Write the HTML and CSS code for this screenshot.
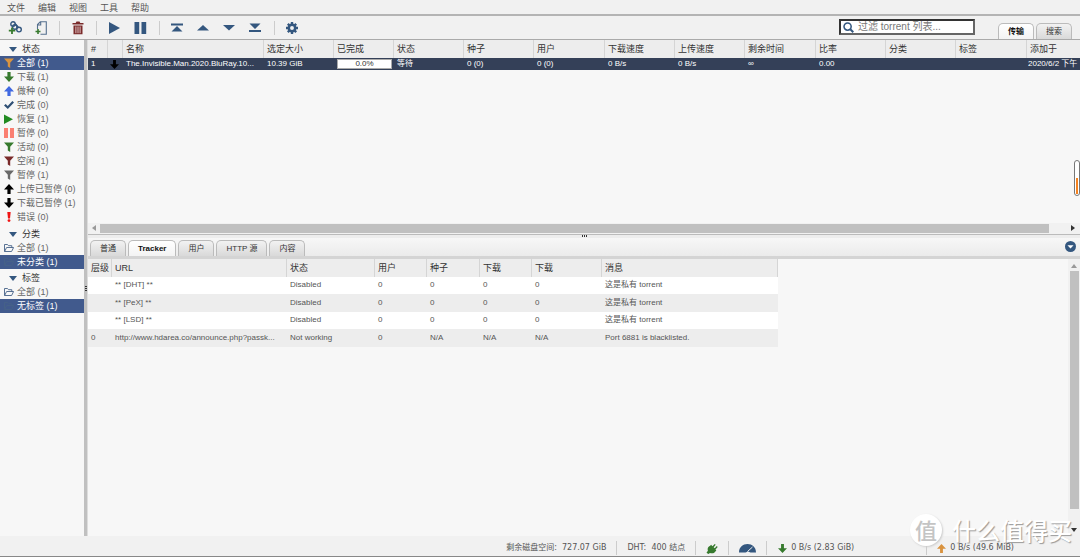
FILE: index.html
```html
<!DOCTYPE html>
<html lang="zh-CN">
<head>
<meta charset="utf-8">
<title>qBittorrent Web UI</title>
<link rel="stylesheet" href="styles.css">
</head>
<body>
<svg class="defs" aria-hidden="true">
  <symbol id="filter" viewBox="0 0 10 10"><path d="M0 .5h10L6.200 4.800V10L3.800 8.600V4.800z"/></symbol>
  <symbol id="down" viewBox="0 0 10 10"><path d="M3.400 0h3.200v4.600H10L5 10 0 4.600h3.400z"/></symbol>
  <symbol id="up" viewBox="0 0 10 10"><path d="M3.400 10h3.200V5.400H10L5 0 0 5.400h3.400z"/></symbol>
  <symbol id="check" viewBox="0 0 10 10"><path d="M0 5.600 1.700 4l2 2.100L8.400 1 10 2.500 3.800 9z"/></symbol>
  <symbol id="play" viewBox="0 0 10 10"><path d="M0 .5l9 4.700-9 4.700z"/></symbol>
  <symbol id="pause" viewBox="0 0 10 10"><path d="M0 0h4v10H0zM6 0h4v10H6z"/></symbol>
  <symbol id="error" viewBox="0 0 10 10"><path d="M3.300 0h3.400L6 6.600H4z"/><circle cx="5" cy="8.600" r="1.400"/></symbol>
  <symbol id="folder" viewBox="0 0 10 10"><path d="M.5 8.500V1.500h3l1 1.200h3.300v1.800M.6 8.500l2-4h7l-2 4z" fill="none" stroke="currentColor" stroke-width=".9" stroke-linejoin="round"/></symbol>
  <symbol id="caret" viewBox="0 0 8 5"><path d="M0 0h8L4 5z"/></symbol>
</svg>

<nav class="menubar">
  <button>文件</button><button>编辑</button><button>视图</button><button>工具</button><button>帮助</button>
</nav>

<header class="toolbar">
  <div class="tools">
    <button aria-label="添加链接"><svg viewBox="0 0 14 14"><g fill="none" stroke="#34577f" stroke-width="1.400"><circle cx="5" cy="3" r="2.200"/><circle cx="6.800" cy="6" r="2.200"/><circle cx="11" cy="8.600" r="2.300"/><path d="M7 2.500 10.500 6.500"/></g><path d="M4 6.500v6.500M.8 9.700h6.500" stroke="#377a2e" stroke-width="1.800"/></svg></button>
    <button aria-label="添加文件"><svg viewBox="0 0 14 14"><path d="M3.500 8V3.500l2.800-2.700h6v12.400H6.500M3.500 4h3.200V.8" fill="none" stroke="#56708f" stroke-width="1.100"/><path d="M4 8v5M1.500 10.500h5" stroke="#377a2e" stroke-width="1.600"/></svg></button>
    <span class="sep"></span>
    <button aria-label="删除"><svg viewBox="0 0 14 14"><path d="M1.500 2h3.200L5.500.5h3L9.300 2h3.200v1.600h-11zM2.500 4.400h9v8.800h-9z" fill="#7a2a2a"/><path d="M4.900 5.500v6.700M7 5.500v6.700M9.100 5.500v6.700" stroke="#ead4d4" stroke-width=".9"/></svg></button>
    <span class="sep"></span>
    <button aria-label="继续"><svg viewBox="0 0 14 14"><path d="M1 1l11 6L1 13z"/></svg></button>
    <button aria-label="暂停"><svg viewBox="0 0 14 14"><path d="M.5 1h4.700v12H.5zM7.500 1h4.700v12H7.500z"/></svg></button>
    <span class="sep"></span>
    <button aria-label="移到顶部"><svg viewBox="0 0 14 14"><path d="M0 2.500h12v2H0zM6 5l5.500 5.500H.5z"/></svg></button>
    <button aria-label="上移"><svg viewBox="0 0 14 14"><path d="M6 4l6 5.500H0z"/></svg></button>
    <button aria-label="下移"><svg viewBox="0 0 14 14"><path d="M6 9.500 12 4H0z"/></svg></button>
    <button aria-label="移到底部"><svg viewBox="0 0 14 14"><path d="M.5 2.500h11L6 8zM0 9h12v2H0z"/></svg></button>
    <span class="sep"></span>
    <button aria-label="选项"><svg viewBox="0 0 14 14"><g fill="none" stroke="#34577f"><circle cx="6" cy="7" r="3.200" stroke-width="2.500"/><path d="M6 1v2.500M6 10.500V13M0 7h2.500M9.500 7H12M1.800 2.800l1.700 1.700M8.500 9.500l1.700 1.700M10.200 2.800 8.500 4.500M3.500 9.500l-1.700 1.700" stroke-width="2.400"/></g></svg></button>
  </div>
  <label class="search">
    <svg viewBox="0 0 12 12"><g fill="none" stroke="#34577f"><circle cx="5" cy="5" r="3.900" stroke-width="1.700"/><path d="M8 8l3.200 3.200" stroke-width="2.200"/></g></svg>
    <input type="text" placeholder="过滤 torrent 列表..." aria-label="过滤 torrent 列表">
  </label>
  <div class="tabs view-tabs"><button class="active">传输</button><button>搜索</button></div>
</header>

<div class="workspace">
  <aside class="sidebar">
    <section>
      <h2><svg><use href="#caret"/></svg>状态</h2>
      <ul>
        <li><button class="selected"><svg class="orange"><use href="#filter"/></svg>全部 (1)</button></li>
        <li><button><svg class="green"><use href="#down"/></svg>下载 (1)</button></li>
        <li><button><svg class="blue"><use href="#up"/></svg>做种 (0)</button></li>
        <li><button><svg class="navy"><use href="#check"/></svg>完成 (0)</button></li>
        <li><button><svg class="bright"><use href="#play"/></svg>恢复 (1)</button></li>
        <li><button><svg class="salmon"><use href="#pause"/></svg>暂停 (0)</button></li>
        <li><button><svg class="green"><use href="#filter"/></svg>活动 (0)</button></li>
        <li><button><svg class="maroon"><use href="#filter"/></svg>空闲 (1)</button></li>
        <li><button><svg class="grey"><use href="#filter"/></svg>暂停 (1)</button></li>
        <li><button><svg class="black"><use href="#up"/></svg>上传已暂停 (0)</button></li>
        <li><button><svg class="black"><use href="#down"/></svg>下载已暂停 (1)</button></li>
        <li><button><svg class="red"><use href="#error"/></svg>错误 (0)</button></li>
      </ul>
    </section>
    <section>
      <h2><svg><use href="#caret"/></svg>分类</h2>
      <ul>
        <li><button><svg class="navy"><use href="#folder"/></svg>全部 (1)</button></li>
        <li><button class="selected"><svg class="navy"><use href="#folder"/></svg>未分类 (1)</button></li>
      </ul>
    </section>
    <section>
      <h2><svg><use href="#caret"/></svg>标签</h2>
      <ul>
        <li><button><svg class="navy"><use href="#folder"/></svg>全部 (1)</button></li>
        <li><button class="selected"><svg class="navy"><use href="#folder"/></svg>无标签 (1)</button></li>
      </ul>
    </section>
  </aside>
  <div class="vsplit"><i></i><i></i><i></i></div>

  <main class="content">
    <section class="transfers">
      <div class="list">
        <table class="torrents">
          <colgroup><col class="w20"><col class="w15"><col class="w141"><col class="w70"><col class="w60"><col class="w70"><col class="w70"><col class="w71"><col class="w70"><col class="w70"><col class="w71"><col class="w70"><col class="w70"><col class="w71"><col class="w70"></colgroup>
          <thead><tr><th>#</th><th></th><th>名称</th><th>选定大小</th><th>已完成</th><th>状态</th><th>种子</th><th>用户</th><th>下载速度</th><th>上传速度</th><th>剩余时间</th><th>比率</th><th>分类</th><th>标签</th><th>添加于</th></tr></thead>
          <tbody><tr><td>1</td><td class="state"><svg class="black"><use href="#down"/></svg></td><td>The.Invisible.Man.2020.BluRay.10...</td><td>10.39 GiB</td><td class="done"><div class="progress">0.0%</div></td><td>等待</td><td>0 (0)</td><td>0 (0)</td><td>0 B/s</td><td>0 B/s</td><td>∞</td><td>0.00</td><td></td><td></td><td>2020/6/2 下午</td></tr></tbody>
        </table>
      </div>
      <div class="hscroll"><svg viewBox="0 0 4 6"><path d="M4 0v6L0 3z" fill="#999"/></svg><span></span><svg viewBox="0 0 4 6"><path d="M0 0v6l4-3z" fill="#333"/></svg></div>
    </section>
    <div class="hsplit"><i></i><i></i><i></i></div>
    <section class="details">
      <div class="detail-bar">
        <div class="tabs"><button>普通</button><button class="active">Tracker</button><button>用户</button><button>HTTP 源</button><button>内容</button></div>
        <button class="collapse" aria-label="折叠"><svg viewBox="0 0 10 10"><circle cx="5" cy="5" r="5" fill="#34577f"/><path d="M2.200 3.800h5.600L5 6.800z" fill="#fff"/></svg></button>
      </div>
      <div class="detail-body">
        <div class="tracker-wrap">
          <table class="trackers">
            <colgroup><col class="w24"><col class="w175"><col class="w88"><col class="w52"><col class="w53"><col class="w52"><col class="w70"><col class="w176"></colgroup>
            <thead><tr><th>层级</th><th>URL</th><th>状态</th><th>用户</th><th>种子</th><th>下载</th><th>下载</th><th>消息</th></tr></thead>
            <tbody>
              <tr><td></td><td>** [DHT] **</td><td>Disabled</td><td>0</td><td>0</td><td>0</td><td>0</td><td>这是私有 torrent</td></tr>
              <tr><td></td><td>** [PeX] **</td><td>Disabled</td><td>0</td><td>0</td><td>0</td><td>0</td><td>这是私有 torrent</td></tr>
              <tr><td></td><td>** [LSD] **</td><td>Disabled</td><td>0</td><td>0</td><td>0</td><td>0</td><td>这是私有 torrent</td></tr>
              <tr><td>0</td><td>http://www.hdarea.co/announce.php?passk...</td><td>Not working</td><td>0</td><td>N/A</td><td>N/A</td><td>N/A</td><td>Port 6881 is blacklisted.</td></tr>
            </tbody>
          </table>
        </div>
        <div class="vscroll"><svg viewBox="0 0 6 4"><path d="M0 4h6L3 0z" fill="#999"/></svg><span></span><svg viewBox="0 0 6 4"><path d="M0 0h6L3 4z" fill="#333"/></svg></div>
      </div>
    </section>
  </main>
</div>

<footer class="statusbar">
  <span class="item">剩余磁盘空间:&nbsp; 727.07 GiB</span>
  <span class="item">DHT:&nbsp; 400 结点</span>
  <span class="item"><svg class="plug" viewBox="0 0 12 12"><path d="M0 10.500l1.500-2C.6 6 2 3.600 4 3l1-1 1.500 1.500L9 1l1 1-2.200 2.500L9 5.700 11.200 3.400l1 1L9.800 7l.9 1.200-1 1C8.500 11.200 6 11.700 3.800 10.800L2 12z" fill="#377a2e"/></svg></span>
  <span class="item"><svg class="gauge" viewBox="0 0 17 9"><path d="M0 8.500C0 3 4 0 8.500 0S17 3 17 8.500h-5.500L9 7.500 6.500 8.500z" fill="#34577f"/><path d="M8.500 7.500 13.500 3" stroke="#f1f1f1"/></svg></span>
  <span class="item rate down-rate"><svg class="green"><use href="#down"/></svg>0 B/s (2.83 GiB)</span>
  <span class="item rate"><svg class="orange"><use href="#up"/></svg>0 B/s (49.6 MiB)</span>
</footer>

<div class="gauge-pill"><span></span></div>
<div class="watermark"><span class="badge">值</span><span>什么值得买</span></div>
</body>
</html>
```
FILE: styles.css
```css
* { box-sizing: border-box; }
body {
  margin: 0;
  height: 100vh;
  display: flex;
  flex-direction: column;
  overflow: hidden;
  background: #f7f7f7;
  color: #555;
  font: 8px/14px "Liberation Sans", "Noto Sans CJK SC", sans-serif;
}
.defs { display: none; }
button { margin: 0; padding: 0; border: 0; background: none; color: inherit; font: inherit; white-space: nowrap; }
svg { display: block; fill: #34577f; flex: none; }
svg.orange { fill: #d9933f; }
svg.green { fill: #377a2e; }
svg.blue { fill: #4169e1; }
svg.navy { fill: #2f4f74; color: #466288; }
svg.bright { fill: #228b22; }
svg.salmon { fill: #fa8072; }
svg.maroon { fill: #7a2a2a; }
svg.grey { fill: #696969; }
svg.black { fill: #000; }
svg.red { fill: #f01414; }

.menubar {
  display: flex;
  gap: 13px;
  padding: 1px 7px 0;
  height: 16px;
  background: #f1f1f1;
  border-bottom: 2px solid #b4b4b4;
  font-size: 9px;
  line-height: 14px;
}

.toolbar {
  display: flex;
  align-items: center;
  height: 24px;
  padding-right: 8px;
  background: #f1f1f1;
  border-bottom: 1px solid #aaa;
}
.tools { display: flex; align-items: center; padding-left: 2px; flex: 1; }
.tools button { width: 26px; display: flex; justify-content: center; }
.tools svg { width: 14px; height: 14px; }
.sep { width: 1px; height: 14px; margin: 0 5px; background: #ccc; }
.search {
  display: flex;
  align-items: center;
  align-self: flex-start;
  width: 136px;
  height: 16px;
  margin: 3px 23px 0 0;
  padding-left: 2px;
  gap: 4px;
  background: #fff;
  border: 2px solid #333;
  border-right-color: #666;
  border-bottom-color: #666;
}
.search svg { width: 11px; height: 11px; }
.search input { flex: 1; min-width: 0; padding: 0; border: 0; outline: 0; background: none; font: 10px/12px "Liberation Sans", "Noto Sans CJK SC", sans-serif; }
.search input::placeholder { color: #777; opacity: 1; }

.tabs { display: flex; align-items: flex-end; align-self: flex-end; gap: 2px; }
.tabs button {
  height: 16px;
  padding: 0 9px;
  background: linear-gradient(#f2f2f2, #d9d9d9);
  border: 1px solid #bbb;
  border-bottom: 0;
  border-radius: 5px 5px 0 0;
  color: #333;
  font-size: 8px;
  line-height: 15px;
}
.tabs button.active { background: linear-gradient(#fff, #f3f3f3); color: #111; font-weight: bold; }
.view-tabs button { width: 36px; padding: 0; }

.workspace { flex: 1; display: flex; min-height: 0; }
.sidebar { width: 84px; background: #f7f7f7; }
.sidebar h2 {
  display: flex;
  align-items: center;
  gap: 5px;
  height: 16px;
  margin: 0;
  padding: 2px 0 0 9px;
  color: #333;
  font-size: 9px;
  font-weight: normal;
}
.sidebar section:nth-child(2) h2 { height: 17px; padding-top: 3px; }
.sidebar h2 svg { width: 8px; height: 5px; }
.sidebar ul { margin: 0; padding: 0; list-style: none; }
.sidebar li button {
  display: flex;
  align-items: center;
  gap: 3px;
  width: 100%;
  height: 14px;
  padding-left: 4px;
  font-size: 9px;
  color: #666;
}
.sidebar li svg { width: 10px; height: 10px; }
.sidebar li .selected { background: #415a8d; color: #fff; }

.vsplit, .hsplit { display: flex; align-items: center; justify-content: center; gap: 1px; }
.vsplit { flex-direction: column; width: 4px; background: #c0c0c0; border-right: 1px solid #ddd; }
.hsplit { height: 4px; background: #ededed; border-top: 1px solid #bbb; }
.vsplit i { width: 2px; height: 1px; background: #333; }
.hsplit i { width: 1px; height: 2px; background: #333; }

.content { flex: 1; min-width: 0; display: flex; flex-direction: column; }
.transfers { flex: 13 1 0; min-height: 0; display: flex; flex-direction: column; }
.list { flex: 1; overflow: hidden; }
table { border-collapse: separate; border-spacing: 0; table-layout: fixed; }
th, td { padding: 0 0 0 3px; overflow: hidden; text-overflow: ellipsis; white-space: nowrap; text-align: left; }
th { height: 18px; background: #ededed; border-right: 1px solid #d5d5d5; color: #333; font-size: 9px; font-weight: normal; }
.torrents { width: 1009px; }
.torrents td { height: 12px; line-height: 12px; background: #344058; color: #fff; }
.torrents td:last-child { padding-left: 1px; }
.torrents .state { padding: 0 0 0 2px; }
.state svg { width: 9px; height: 9px; }
.torrents .done { padding: 0 2px 0 3px; }
.progress { height: 10px; background: #fff; border: 1px solid #aaa; color: #333; text-align: center; line-height: 8px; }
.w15 { width: 15px; }
.w20 { width: 20px; }
.w24 { width: 24px; }
.w52 { width: 52px; }
.w53 { width: 53px; }
.w60 { width: 60px; }
.w70 { width: 70px; }
.w71 { width: 71px; }
.w88 { width: 88px; }
.w141 { width: 141px; }
.w175 { width: 175px; }
.w176 { width: 176px; }

.hscroll, .vscroll { display: flex; align-items: center; background: #f1f1f1; }
.hscroll { height: 11px; gap: 4px; padding: 0 5px 0 4px; }
.hscroll svg { width: 4px; height: 6px; }
.hscroll span { flex: 1; height: 9px; margin-right: 18px; background: #c0c0c0; }
.vscroll { flex-direction: column; width: 12px; gap: 3px; padding: 5px 0 4px; }
.vscroll svg { width: 6px; height: 4px; }
.vscroll span { flex: 1; width: 9px; margin-bottom: 16px; background: #c0c0c0; }

.details { flex: 20 1 0; min-height: 0; display: flex; flex-direction: column; }
.detail-bar {
  display: flex;
  justify-content: space-between;
  align-items: center;
  height: 21px;
  padding: 0 4px 0 2px;
  background: linear-gradient(#f7f7f7, #ebebeb);
  border-bottom: 3px solid #d4d4d4;
}
.collapse svg { width: 11px; height: 11px; }
.detail-body { flex: 1; min-height: 0; display: flex; }
.tracker-wrap { flex: 1; overflow: hidden; }
.trackers { width: 690px; }
.trackers td { height: 17px; background: #fff; }
.trackers tr:nth-child(even) td { height: 18px; background: #ededed; }

.statusbar {
  display: flex;
  justify-content: flex-end;
  align-items: center;
  height: 21px;
  padding: 4px 66px 0 0;
  background: #f1f1f1;
  border-bottom: 1px solid #888;
  font-family: "DejaVu Sans", "Noto Sans CJK SC", sans-serif;
}
.item { display: flex; align-items: center; height: 14px; padding: 0 10px; border-right: 1px solid #ccc; white-space: nowrap; }
.item:last-child { padding-right: 0; border: 0; }
.rate { gap: 4px; }
.rate svg { width: 9px; height: 9px; }
.down-rate { padding: 0 72px 0 11px; }
.plug { width: 12px; height: 11px; }
.gauge { width: 17px; height: 9px; }

.gauge-pill {
  position: absolute;
  top: 160px;
  right: 0;
  width: 6px;
  height: 36px;
  padding: 17px 1px 0;
  background: #fff;
  border: 1px solid #777;
  border-radius: 3px;
}
.gauge-pill span { display: block; height: 16px; background: #f58220; }

.watermark {
  position: absolute;
  right: 8px;
  bottom: 11px;
  display: flex;
  align-items: center;
  gap: 10px;
  color: #fff;
  font: 500 24px/30px "Noto Sans CJK SC", sans-serif;
  text-shadow: 1px 1px 1px #999;
  pointer-events: none;
}
.badge { width: 32px; height: 32px; background: #fff; border-radius: 50%; box-shadow: 1px 1px 2px #ccc; color: #c4c4c4; font-size: 22px; text-align: center; text-shadow: none; }
```
